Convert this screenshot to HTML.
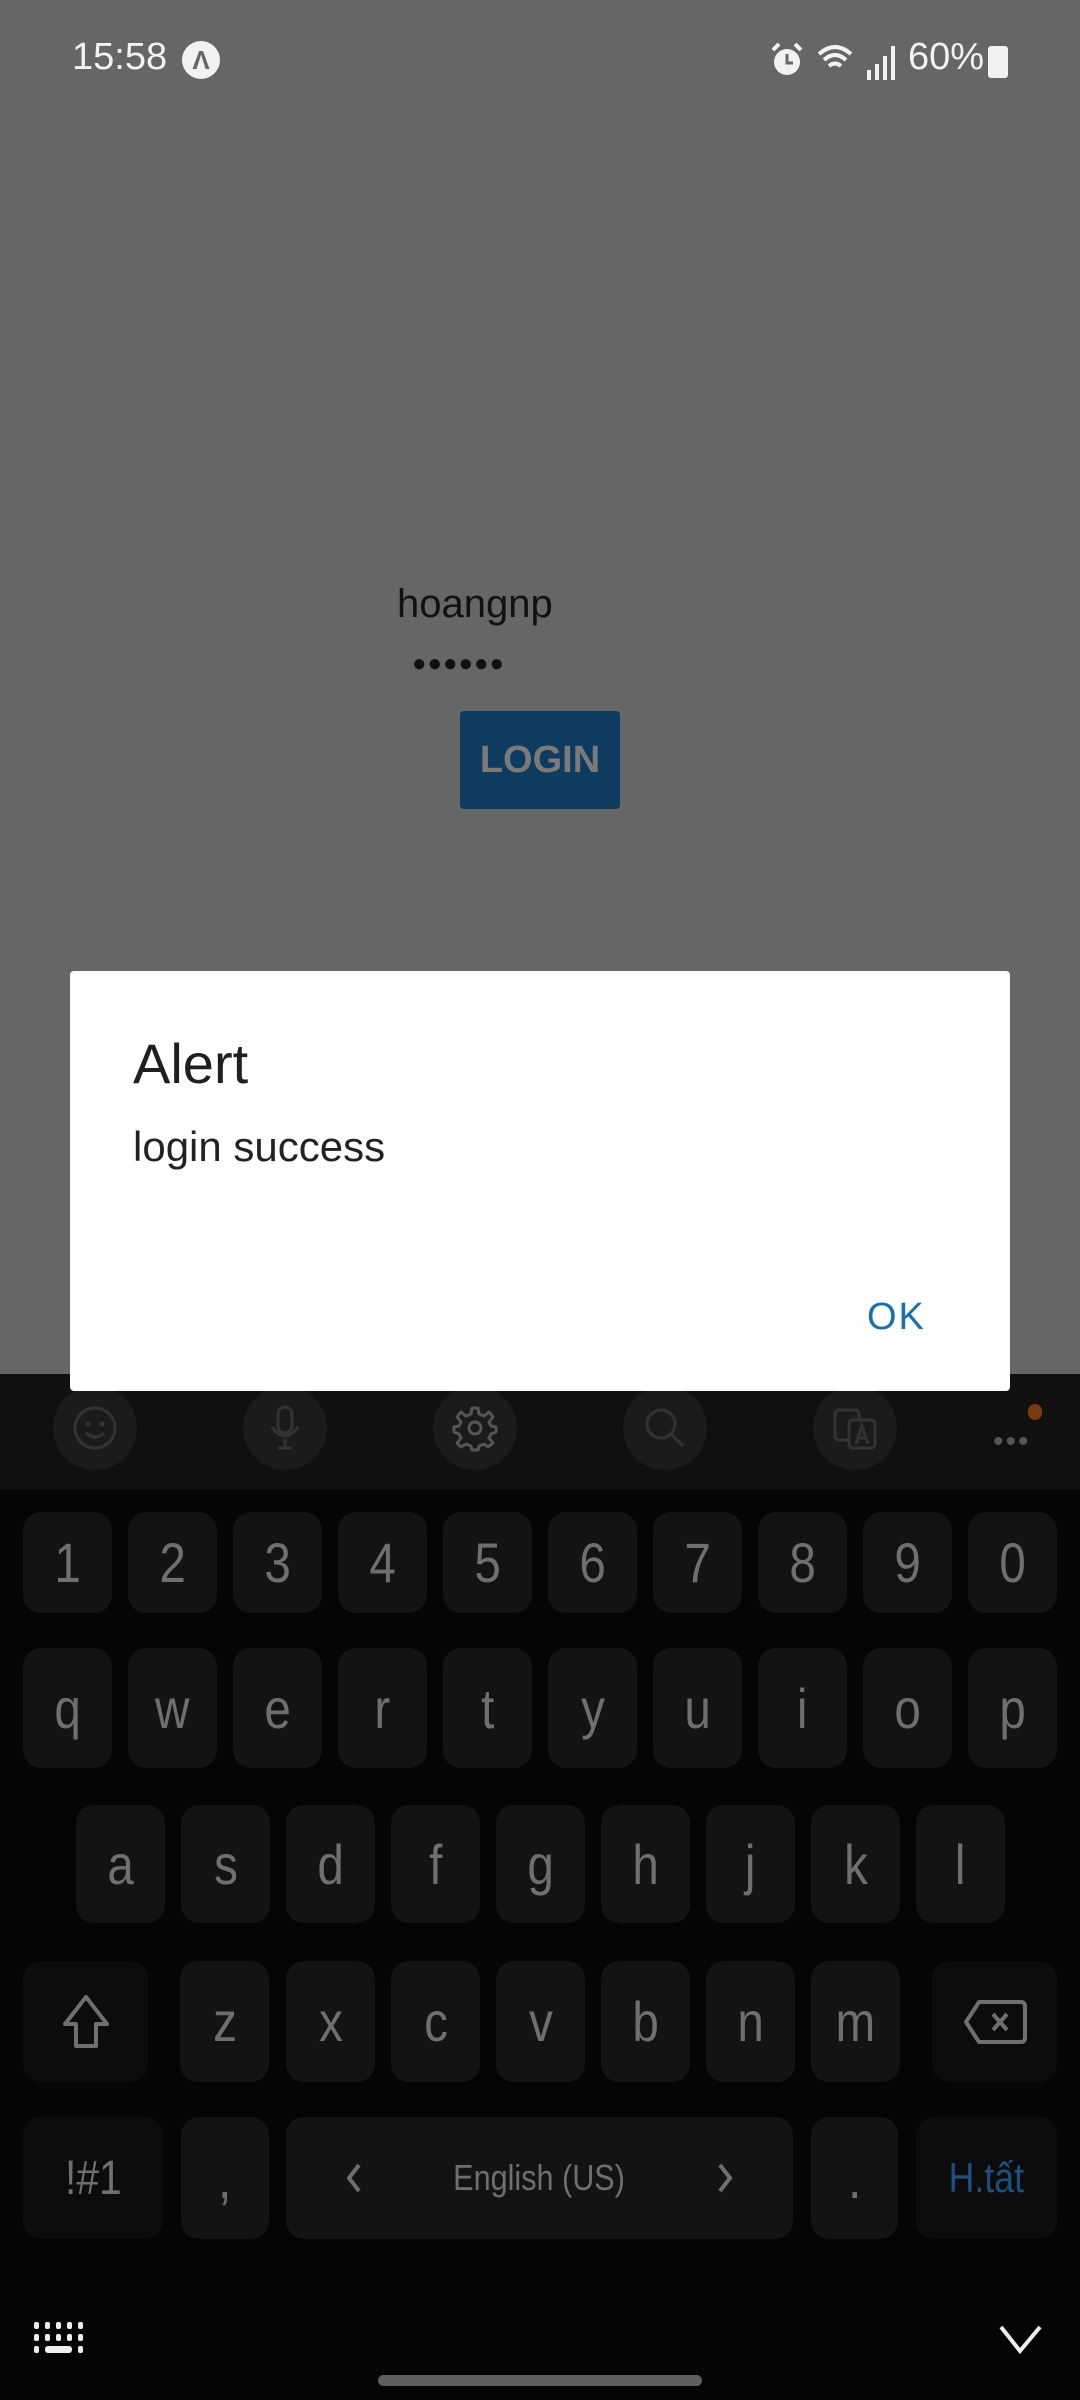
<!DOCTYPE html>
<html><head><meta charset="utf-8"><style>
*{margin:0;padding:0;box-sizing:border-box}
body{width:1080px;height:2400px;background:#666;position:relative;overflow:hidden;font-family:"Liberation Sans",sans-serif}
.a{position:absolute}
.k{position:absolute;background:#131313;border-radius:18px;color:#6f6f6f;display:flex;align-items:center;justify-content:center;font-size:56px}
.k span.t{display:inline-block;transform:scaleX(0.85)}
.d{background:#0c0c0c}
.c{position:absolute;width:84px;height:84px;border-radius:42px;background:#1b1b1b;top:1386px;display:flex;align-items:center;justify-content:center}
</style></head><body>
<div class="a" style="left:72px;top:36px;font-size:38px;color:#f2f2f2">15:58</div>
<div class="a" style="left:182px;top:41px;width:38px;height:38px;border-radius:19px;background:#f2f2f2;color:#666;font-size:26px;font-weight:bold;text-align:center;line-height:38px">Λ</div>
<svg class="a" style="left:770px;top:42px" width="34" height="36"><circle cx="17" cy="20" r="13" fill="#f2f2f2"/><path d="M3 8 L9 2 M31 8 L25 2" stroke="#f2f2f2" stroke-width="4"/><path d="M17 12 V21 H23" stroke="#666" stroke-width="3" fill="none"/></svg>
<svg class="a" style="left:815px;top:40px" width="80" height="42"><path d="M4 14 Q20 0 36 14 M9 20 Q20 10 31 20 M14 26 Q20 21 26 26" stroke="#f2f2f2" stroke-width="4" fill="none"/><rect x="52" y="30" width="4" height="10" fill="#f2f2f2"/><rect x="60" y="24" width="4" height="16" fill="#f2f2f2"/><rect x="68" y="16" width="4" height="24" fill="#f2f2f2"/><rect x="76" y="6" width="4" height="34" fill="#f2f2f2"/></svg>
<div class="a" style="left:908px;top:36px;font-size:38px;color:#f2f2f2">60%</div>
<div class="a" style="left:988px;top:46px;width:20px;height:32px;border-radius:3px;background:#f2f2f2"></div>

<div class="a" style="left:397px;top:582px;font-size:40px;color:#111">hoangnp</div>
<div class="a" style="left:412px;top:650px;font-size:24px;color:#111;letter-spacing:1px">●●●●●●</div>
<div class="a" style="left:460px;top:711px;width:160px;height:98px;background:#0e3c60;border-radius:4px;color:#7a7a7a;font-size:38px;font-weight:bold;text-align:center;line-height:98px">LOGIN</div>

<div class="a" style="left:0;top:1374px;width:1080px;height:116px;background:#101010"></div>
<div class="a" style="left:0;top:1490px;width:1080px;height:910px;background:#050505"></div>
<div class="c" style="left:53px"><svg width="48" height="48"><circle cx="24" cy="24" r="20" stroke="#333" stroke-width="3" fill="none"/><circle cx="17" cy="20" r="2.5" fill="#333"/><circle cx="31" cy="20" r="2.5" fill="#333"/><path d="M15 29 Q24 37 33 29" stroke="#333" stroke-width="3" fill="none"/></svg></div>
<div class="c" style="left:243px"><svg width="48" height="50"><rect x="17" y="4" width="14" height="26" rx="7" stroke="#333" stroke-width="3" fill="none"/><path d="M11 24 Q24 42 37 24 M24 36 V44 M17 45 H31" stroke="#333" stroke-width="3" fill="none"/></svg></div>
<div class="c" style="left:433px"><svg width="48" height="48"><circle cx="24" cy="24" r="6" stroke="#555" stroke-width="3" fill="none"/><path d="M21 4 H27 L28 10 L33 12 L38 8 L42 13 L38 18 L40 22 L45 23 V28 L40 30 L38 34 L42 39 L37 43 L33 40 L28 42 L27 46 H21 L20 42 L15 40 L10 43 L6 39 L10 34 L8 30 L3 28 V23 L8 22 L10 18 L6 13 L10 8 L15 12 L20 10 Z" stroke="#555" stroke-width="3" fill="none" stroke-linejoin="round"/></svg></div>
<div class="c" style="left:623px"><svg width="48" height="48"><circle cx="20" cy="20" r="14" stroke="#333" stroke-width="3" fill="none"/><path d="M30 30 L42 42" stroke="#333" stroke-width="3"/></svg></div>
<div class="c" style="left:813px"><svg width="48" height="48"><rect x="4" y="6" width="24" height="30" rx="4" stroke="#333" stroke-width="3" fill="none"/><rect x="18" y="16" width="26" height="28" rx="4" stroke="#333" stroke-width="3" fill="#1b1b1b"/><path d="M25 40 L31 22 L37 40 M27 34 H35" stroke="#333" stroke-width="3" fill="none"/></svg></div>
<div class="a" style="left:993px;top:1425px;color:#555;font-size:30px;letter-spacing:2px">•••</div>
<div class="a" style="left:1028px;top:1404px;width:14px;height:16px;border-radius:8px;background:#7a3a10"></div>

<div class="a" style="left:70px;top:971px;width:940px;height:420px;background:#fff;border-radius:4px">
<div class="a" style="left:63px;top:60px;font-size:56px;color:#202020">Alert</div>
<div class="a" style="left:63px;top:152px;font-size:42px;color:#222">login success</div>
<div class="a" style="left:797px;top:325px;font-size:38px;color:#1a6fb0;font-weight:500;letter-spacing:2px">OK</div>
</div>

<div class="k" style="left:23px;top:1512px;width:89px;height:101px"><span class="t">1</span></div>
<div class="k" style="left:128px;top:1512px;width:89px;height:101px"><span class="t">2</span></div>
<div class="k" style="left:233px;top:1512px;width:89px;height:101px"><span class="t">3</span></div>
<div class="k" style="left:338px;top:1512px;width:89px;height:101px"><span class="t">4</span></div>
<div class="k" style="left:443px;top:1512px;width:89px;height:101px"><span class="t">5</span></div>
<div class="k" style="left:548px;top:1512px;width:89px;height:101px"><span class="t">6</span></div>
<div class="k" style="left:653px;top:1512px;width:89px;height:101px"><span class="t">7</span></div>
<div class="k" style="left:758px;top:1512px;width:89px;height:101px"><span class="t">8</span></div>
<div class="k" style="left:863px;top:1512px;width:89px;height:101px"><span class="t">9</span></div>
<div class="k" style="left:968px;top:1512px;width:89px;height:101px"><span class="t">0</span></div>

<div class="k" style="left:23px;top:1648px;width:89px;height:120px"><span class="t">q</span></div>
<div class="k" style="left:128px;top:1648px;width:89px;height:120px"><span class="t">w</span></div>
<div class="k" style="left:233px;top:1648px;width:89px;height:120px"><span class="t">e</span></div>
<div class="k" style="left:338px;top:1648px;width:89px;height:120px"><span class="t">r</span></div>
<div class="k" style="left:443px;top:1648px;width:89px;height:120px"><span class="t">t</span></div>
<div class="k" style="left:548px;top:1648px;width:89px;height:120px"><span class="t">y</span></div>
<div class="k" style="left:653px;top:1648px;width:89px;height:120px"><span class="t">u</span></div>
<div class="k" style="left:758px;top:1648px;width:89px;height:120px"><span class="t">i</span></div>
<div class="k" style="left:863px;top:1648px;width:89px;height:120px"><span class="t">o</span></div>
<div class="k" style="left:968px;top:1648px;width:89px;height:120px"><span class="t">p</span></div>

<div class="k" style="left:76px;top:1805px;width:89px;height:118px"><span class="t">a</span></div>
<div class="k" style="left:181px;top:1805px;width:89px;height:118px"><span class="t">s</span></div>
<div class="k" style="left:286px;top:1805px;width:89px;height:118px"><span class="t">d</span></div>
<div class="k" style="left:391px;top:1805px;width:89px;height:118px"><span class="t">f</span></div>
<div class="k" style="left:496px;top:1805px;width:89px;height:118px"><span class="t">g</span></div>
<div class="k" style="left:601px;top:1805px;width:89px;height:118px"><span class="t">h</span></div>
<div class="k" style="left:706px;top:1805px;width:89px;height:118px"><span class="t">j</span></div>
<div class="k" style="left:811px;top:1805px;width:89px;height:118px"><span class="t">k</span></div>
<div class="k" style="left:916px;top:1805px;width:89px;height:118px"><span class="t">l</span></div>

<div class="k d" style="left:23px;top:1961px;width:125px;height:121px"><svg width="50" height="56"><path d="M25 3 L46 30 L35 30 L35 52 L15 52 L15 30 L4 30 Z" stroke="#6f6f6f" stroke-width="4" fill="none" stroke-linejoin="round"/></svg></div>
<div class="k" style="left:180px;top:1961px;width:89px;height:121px"><span class="t">z</span></div>
<div class="k" style="left:286px;top:1961px;width:89px;height:121px"><span class="t">x</span></div>
<div class="k" style="left:391px;top:1961px;width:89px;height:121px"><span class="t">c</span></div>
<div class="k" style="left:496px;top:1961px;width:89px;height:121px"><span class="t">v</span></div>
<div class="k" style="left:601px;top:1961px;width:89px;height:121px"><span class="t">b</span></div>
<div class="k" style="left:706px;top:1961px;width:89px;height:121px"><span class="t">n</span></div>
<div class="k" style="left:811px;top:1961px;width:89px;height:121px"><span class="t">m</span></div>
<div class="k d" style="left:932px;top:1961px;width:125px;height:121px"><svg width="64" height="46"><path d="M16 3 L58 3 Q62 3 62 8 L62 38 Q62 43 58 43 L16 43 L3 23 Z" stroke="#6f6f6f" stroke-width="4" fill="none" stroke-linejoin="round"/><path d="M30 15 L44 31 M44 15 L30 31" stroke="#6f6f6f" stroke-width="4"/></svg></div>

<div class="k d" style="left:23px;top:2117px;width:140px;height:122px;font-size:48px"><span class="t">!#1</span></div>
<div class="k" style="left:181px;top:2117px;width:88px;height:122px"><span class="t">,</span></div>
<div class="k" style="left:286px;top:2117px;width:507px;height:122px;font-size:36px"><svg class="a" style="left:58px;top:46px" width="20" height="30"><path d="M15 2 L5 15 L15 28" stroke="#6f6f6f" stroke-width="4" fill="none"/></svg><span class="t">English (US)</span><svg class="a" style="right:58px;top:46px" width="20" height="30"><path d="M5 2 L15 15 L5 28" stroke="#6f6f6f" stroke-width="4" fill="none"/></svg></div>
<div class="k" style="left:811px;top:2117px;width:87px;height:122px"><span class="t">.</span></div>
<div class="k d" style="left:916px;top:2117px;width:141px;height:122px;font-size:42px;color:#1f4f80"><span class="t">H.tất</span></div>

<svg class="a" style="left:34px;top:2322px" width="54" height="32"><g fill="#eee"><rect x="0" y="0" width="5" height="7" rx="2"/><rect x="11" y="0" width="5" height="7" rx="2"/><rect x="22" y="0" width="5" height="7" rx="2"/><rect x="33" y="0" width="5" height="7" rx="2"/><rect x="44" y="0" width="5" height="7" rx="2"/><rect x="0" y="12" width="5" height="7" rx="2"/><rect x="11" y="12" width="5" height="7" rx="2"/><rect x="22" y="12" width="5" height="7" rx="2"/><rect x="33" y="12" width="5" height="7" rx="2"/><rect x="44" y="12" width="5" height="7" rx="2"/><rect x="0" y="24" width="5" height="7" rx="2"/><rect x="11" y="24" width="27" height="7" rx="3"/><rect x="44" y="24" width="5" height="7" rx="2"/></g></svg>
<svg class="a" style="left:998px;top:2322px" width="46" height="34"><path d="M3 5 L22 29 L42 5" stroke="#eee" stroke-width="4" fill="none"/></svg>
<div class="a" style="left:378px;top:2375px;width:324px;height:11px;border-radius:6px;background:#5f5f5f"></div>
</body></html>
